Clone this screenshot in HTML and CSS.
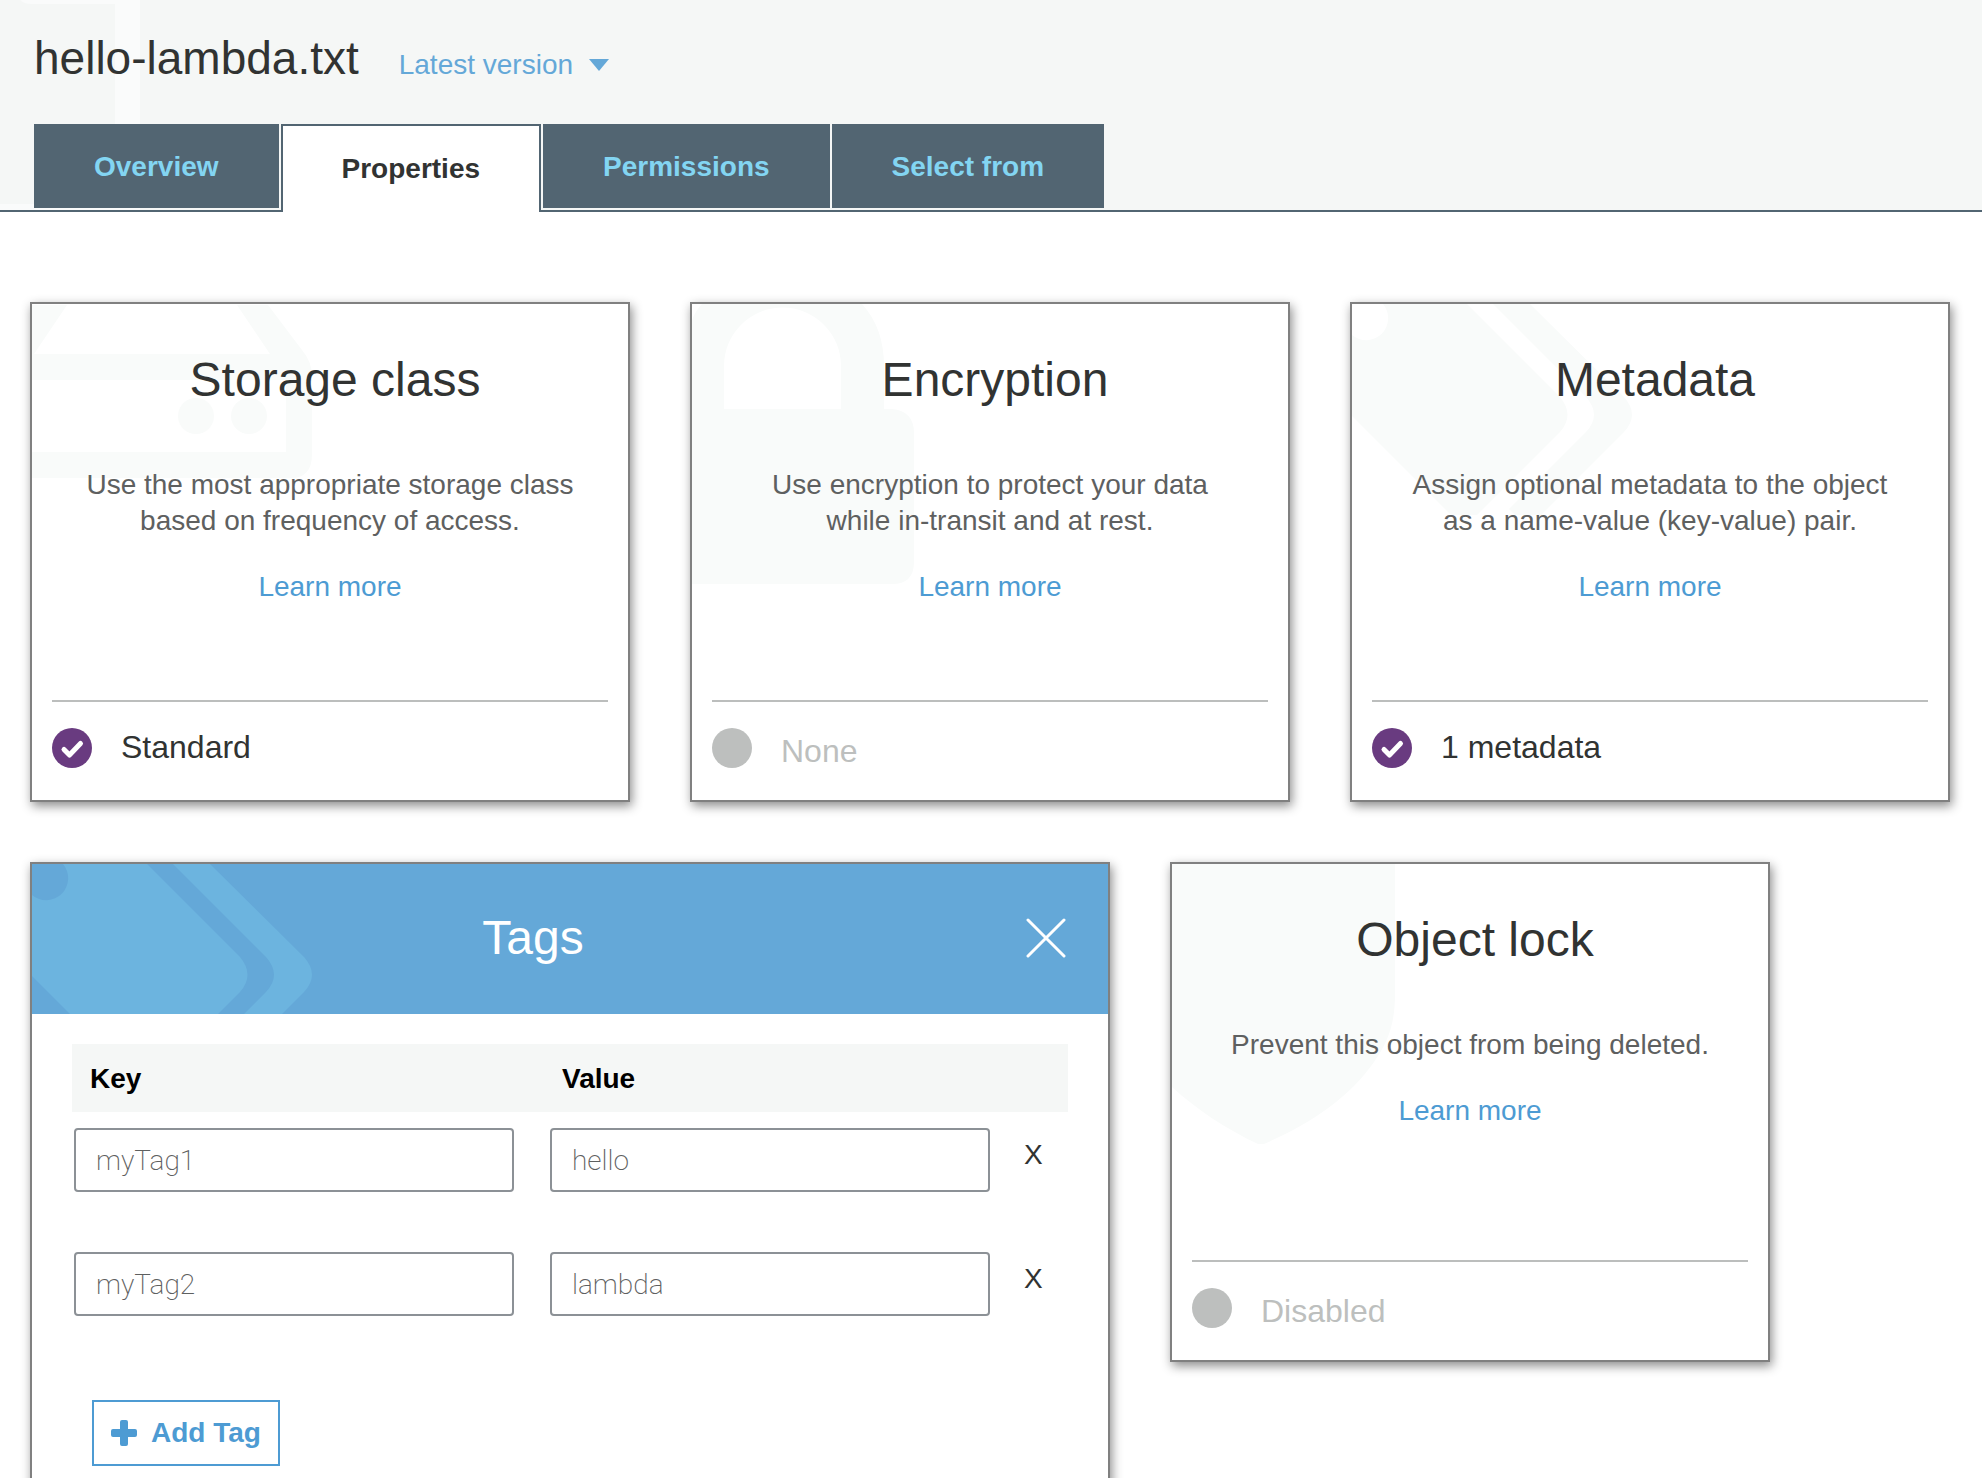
FILE: index.html
```html
<!DOCTYPE html>
<html lang="en">
<head>
<meta charset="utf-8">
<title>hello-lambda.txt</title>
<link rel="stylesheet" href="styles.css">
</head>
<body>
<header class="page-header">
  <svg class="page-header-mark" width="140" height="210" viewBox="0 0 140 210" aria-hidden="true">
    <path d="M20 0H140V210H0V204H115V4H32Q24 4 20 0Z"/>
  </svg>
  <div class="title-row">
    <h1 class="object-name">hello-lambda.txt</h1>
    <button class="version" type="button" aria-haspopup="menu">Latest version
      <svg width="20" height="12" viewBox="0 0 20 12" aria-hidden="true"><path d="M0 0H20L10 12Z"/></svg>
    </button>
  </div>
  <nav class="tabs" role="tablist">
    <button class="tab" type="button" role="tab">Overview</button>
    <button class="tab tab-active" type="button" role="tab" aria-selected="true">Properties</button>
    <button class="tab" type="button" role="tab">Permissions</button>
    <button class="tab" type="button" role="tab">Select from</button>
  </nav>
</header>

<main class="cards">
  <section class="card">
    <svg class="mark" width="282" height="282" viewBox="0 0 282 282" aria-hidden="true">
      <path fill-rule="evenodd" d="M0 1H236L270 46Q280 58 280 72V150Q280 174 259 174H0V148H254V76H0ZM35 1L2 50H238L205 1Z"/>
      <circle cx="164" cy="112" r="18"/><circle cx="217" cy="112" r="18"/>
    </svg>
    <h2 class="card-title">Storage class</h2>
    <p class="card-text">Use the most appropriate storage class based on frequency of access.</p>
    <a class="learn" href="#">Learn more</a>
    <div class="status">
      <svg class="status-icon" width="40" height="40" viewBox="0 0 40 40" aria-hidden="true"><circle cx="20" cy="20" r="20"/><path d="M12 21.500L17.500 27L28.500 15.500"/></svg>
      <span class="status-label">Standard</span>
    </div>
  </section>

  <section class="card">
    <svg class="mark" width="282" height="282" viewBox="0 0 282 282" aria-hidden="true">
      <path fill-rule="evenodd" d="M10 0H170Q192 24 192 62V105H200Q222 107 222 129V258Q222 280 200 280H0V16Q4 6 10 0ZM32 105H149V62A58 58 0 0 0 32 62Z"/>
    </svg>
    <h2 class="card-title">Encryption</h2>
    <p class="card-text">Use encryption to protect your data while in-transit and at rest.</p>
    <a class="learn" href="#">Learn more</a>
    <div class="status status-off">
      <svg class="status-icon" width="40" height="40" viewBox="0 0 40 40" aria-hidden="true"><circle cx="20" cy="20" r="20"/></svg>
      <span class="status-label">None</span>
    </div>
  </section>

  <section class="card">
    <svg class="mark" width="282" height="282" viewBox="0 0 282 282" aria-hidden="true">
      <path d="M31 0H115L208 93Q223 111 208 128L125 211H99L0 112V31A22 22 0 0 0 31 0Z"/>
      <path d="M141 0H178L272 93Q288 111 272 128L189 211H163L157 205L234 128Q250 111 234 93Z"/>
    </svg>
    <h2 class="card-title">Metadata</h2>
    <p class="card-text">Assign optional metadata to the object as a name-value (key-value) pair.</p>
    <a class="learn" href="#">Learn more</a>
    <div class="status">
      <svg class="status-icon" width="40" height="40" viewBox="0 0 40 40" aria-hidden="true"><circle cx="20" cy="20" r="20"/><path d="M12 21.500L17.500 27L28.500 15.500"/></svg>
      <span class="status-label">1 metadata</span>
    </div>
  </section>

  <section class="card card-open">
    <div class="open-head">
      <svg class="mark" width="282" height="150" viewBox="0 0 282 150" aria-hidden="true">
        <path d="M31 0H115L208 93Q223 111 208 128L125 211H99L0 112V31A22 22 0 0 0 31 0Z"/>
        <path d="M141 0H178L272 93Q288 111 272 128L189 211H163L157 205L234 128Q250 111 234 93Z"/>
      </svg>
      <h2 class="open-title">Tags</h2>
      <button class="close" type="button" aria-label="Close">
        <svg width="40" height="40" viewBox="0 0 40 40" aria-hidden="true"><path d="M2 2L38 38M38 2L2 38"/></svg>
      </button>
    </div>
    <div class="open-body">
      <table class="tags">
        <thead>
          <tr><th class="tag-col">Key</th><th class="tag-col">Value</th><th></th></tr>
        </thead>
        <tbody>
          <tr>
            <td><input class="field" type="text" aria-label="Key 1" value="myTag1"></td>
            <td><input class="field" type="text" aria-label="Value 1" value="hello"></td>
            <td><button class="remove" type="button">X</button></td>
          </tr>
          <tr>
            <td><input class="field" type="text" aria-label="Key 2" value="myTag2"></td>
            <td><input class="field" type="text" aria-label="Value 2" value="lambda"></td>
            <td><button class="remove" type="button">X</button></td>
          </tr>
        </tbody>
      </table>
      <button class="add" type="button">
        <svg width="26" height="26" viewBox="0 0 26 26" aria-hidden="true"><path d="M11 0H15Q17 0 17 2V9H24Q26 9 26 11V15Q26 17 24 17H17V24Q17 26 15 26H11Q9 26 9 24V17H2Q0 17 0 15V11Q0 9 2 9H9V2Q9 0 11 0Z"/></svg>
        Add Tag
      </button>
    </div>
  </section>

  <section class="card">
    <svg class="mark" width="282" height="282" viewBox="0 0 282 282" aria-hidden="true">
      <path d="M0 0H223V130C223 160 216 178 202 198C177 234 138 260 92 280H86C54 265 24 245 0 223Z"/>
    </svg>
    <h2 class="card-title">Object lock</h2>
    <p class="card-text">Prevent this object from being deleted.</p>
    <a class="learn" href="#">Learn more</a>
    <div class="status status-off">
      <svg class="status-icon" width="40" height="40" viewBox="0 0 40 40" aria-hidden="true"><circle cx="20" cy="20" r="20"/></svg>
      <span class="status-label">Disabled</span>
    </div>
  </section>
</main>
</body>
</html>
```
FILE: styles.css
```css
* { box-sizing: border-box; }

body {
  margin: 0;
  height: 100vh;
  overflow: hidden;
  background: #fff;
  color: #313332;
  font-family: "Helvetica Neue", "Liberation Sans", Arial, sans-serif;
  font-size: 28px;
  line-height: 36px;
}

button {
  margin: 0;
  padding: 0;
  border: 0;
  background: none;
  color: inherit;
  font: inherit;
  cursor: pointer;
}

h1, h2, p { margin: 0; font-weight: 400; }
a { text-decoration: none; }

/* Header */
.page-header {
  position: relative;
  padding: 30px 34px 0;
  background: #f5f7f6;
  border-bottom: 2px solid #526572;
}
.page-header-mark {
  position: absolute;
  top: 0;
  left: 0;
  fill: #fafbfb;
}
.title-row {
  position: relative;
  display: flex;
  align-items: baseline;
  gap: 40px;
  margin-bottom: 38px;
}
.object-name { font-size: 46px; line-height: 56px; }
.version {
  display: flex;
  align-items: center;
  gap: 16px;
  color: #64a8d8;
}
.version svg { fill: #64a8d8; }

.tabs {
  position: relative;
  display: flex;
  align-items: flex-start;
  gap: 2px;
  height: 86px;
}
.tab {
  height: 84px;
  padding: 2px 60px 0;
  background: #526572;
  color: #83d5f2;
  font-weight: 700;
}
.tab-active {
  height: 88px;
  padding: 0 59px;
  border: 2px solid #526572;
  border-bottom: 0;
  background: #fff;
  color: #313332;
}

/* Cards */
.cards {
  display: flex;
  flex-wrap: wrap;
  align-items: flex-start;
  gap: 60px;
  padding: 90px 30px;
}
.card {
  position: relative;
  display: flex;
  flex-direction: column;
  flex: 0 1 600px;
  min-height: 500px;
  padding: 48px 20px 0;
  border: 2px solid #808080;
  background: #fff;
  box-shadow: 2px 4px 10px rgba(0, 0, 0, .45);
  text-align: center;
}
.mark {
  position: absolute;
  top: 0;
  left: 0;
  fill: #f9fbfa;
}
.card-title, .card-text, .learn, .open-title { position: relative; }
.card-title {
  padding-left: 10px;
  font-size: 48px;
  line-height: 56px;
}
.card-text {
  margin-top: 59px;
  padding: 0 30px;
  color: #5e6060;
}
.learn {
  align-self: center;
  margin-top: 30px;
  color: #4d9bd3;
}
.status {
  display: flex;
  gap: 29px;
  margin-top: auto;
  padding: 26px 0 32px;
  border-top: 2px solid #bcbebd;
}
.status-icon { fill: #693b80; }
.status-icon path {
  fill: none;
  stroke: #fff;
  stroke-width: 5;
  stroke-linecap: round;
  stroke-linejoin: round;
}
.status-label { font-size: 32px; line-height: 38px; }
.status-off .status-icon { fill: #bdbfbe; }
.status-off .status-label {
  padding-top: 8px;
  color: #bdbfbe;
  line-height: 30px;
}

/* Expanded tags card */
.card-open {
  flex-basis: 1080px;
  padding: 0;
  text-align: left;
}
.open-head {
  position: relative;
  display: flex;
  align-items: center;
  height: 150px;
  padding: 0 42px 2px 0;
  background: #64a8d8;
  color: #fff;
}
.open-head .mark { fill: #6cb4df; }
.open-title {
  flex: 1;
  padding-right: 32px;
  padding-left: 40px;
  font-size: 48px;
  line-height: 56px;
  text-align: center;
}
.close { display: flex; }
.close svg {
  fill: none;
  stroke: #fff;
  stroke-width: 3;
  stroke-linecap: round;
}
.open-body { padding: 30px 40px 60px; }
.tags {
  width: 100%;
  border-collapse: collapse;
  table-layout: fixed;
}
.tags th {
  height: 68px;
  padding: 2px 14px 0;
  background: #f5f7f6;
  color: #000;
  text-align: left;
}
.tags th:first-child { padding-left: 18px; }
.tag-col { width: 476px; }
.tags td {
  padding: 16px 0 44px 2px;
  vertical-align: top;
}
.tags td:last-child { padding-left: 0; }
.field {
  display: block;
  width: 440px;
  max-width: 100%;
  height: 64px;
  padding: 0 20px;
  border: 2px solid #8c9196;
  border-radius: 4px;
  background: #fff;
  color: #5e6060;
  font-family: Roboto, "Liberation Sans", sans-serif;
  font-size: 28px;
  font-weight: 200;
}
.remove { line-height: 54px; }
.add {
  display: flex;
  align-items: center;
  gap: 14px;
  height: 66px;
  margin: 40px 0 0 20px;
  padding: 0 17px;
  border: 2px solid #4d9bd3;
  color: #4d9bd3;
  font-weight: 700;
}
.add svg { fill: #4d9bd3; }
```
